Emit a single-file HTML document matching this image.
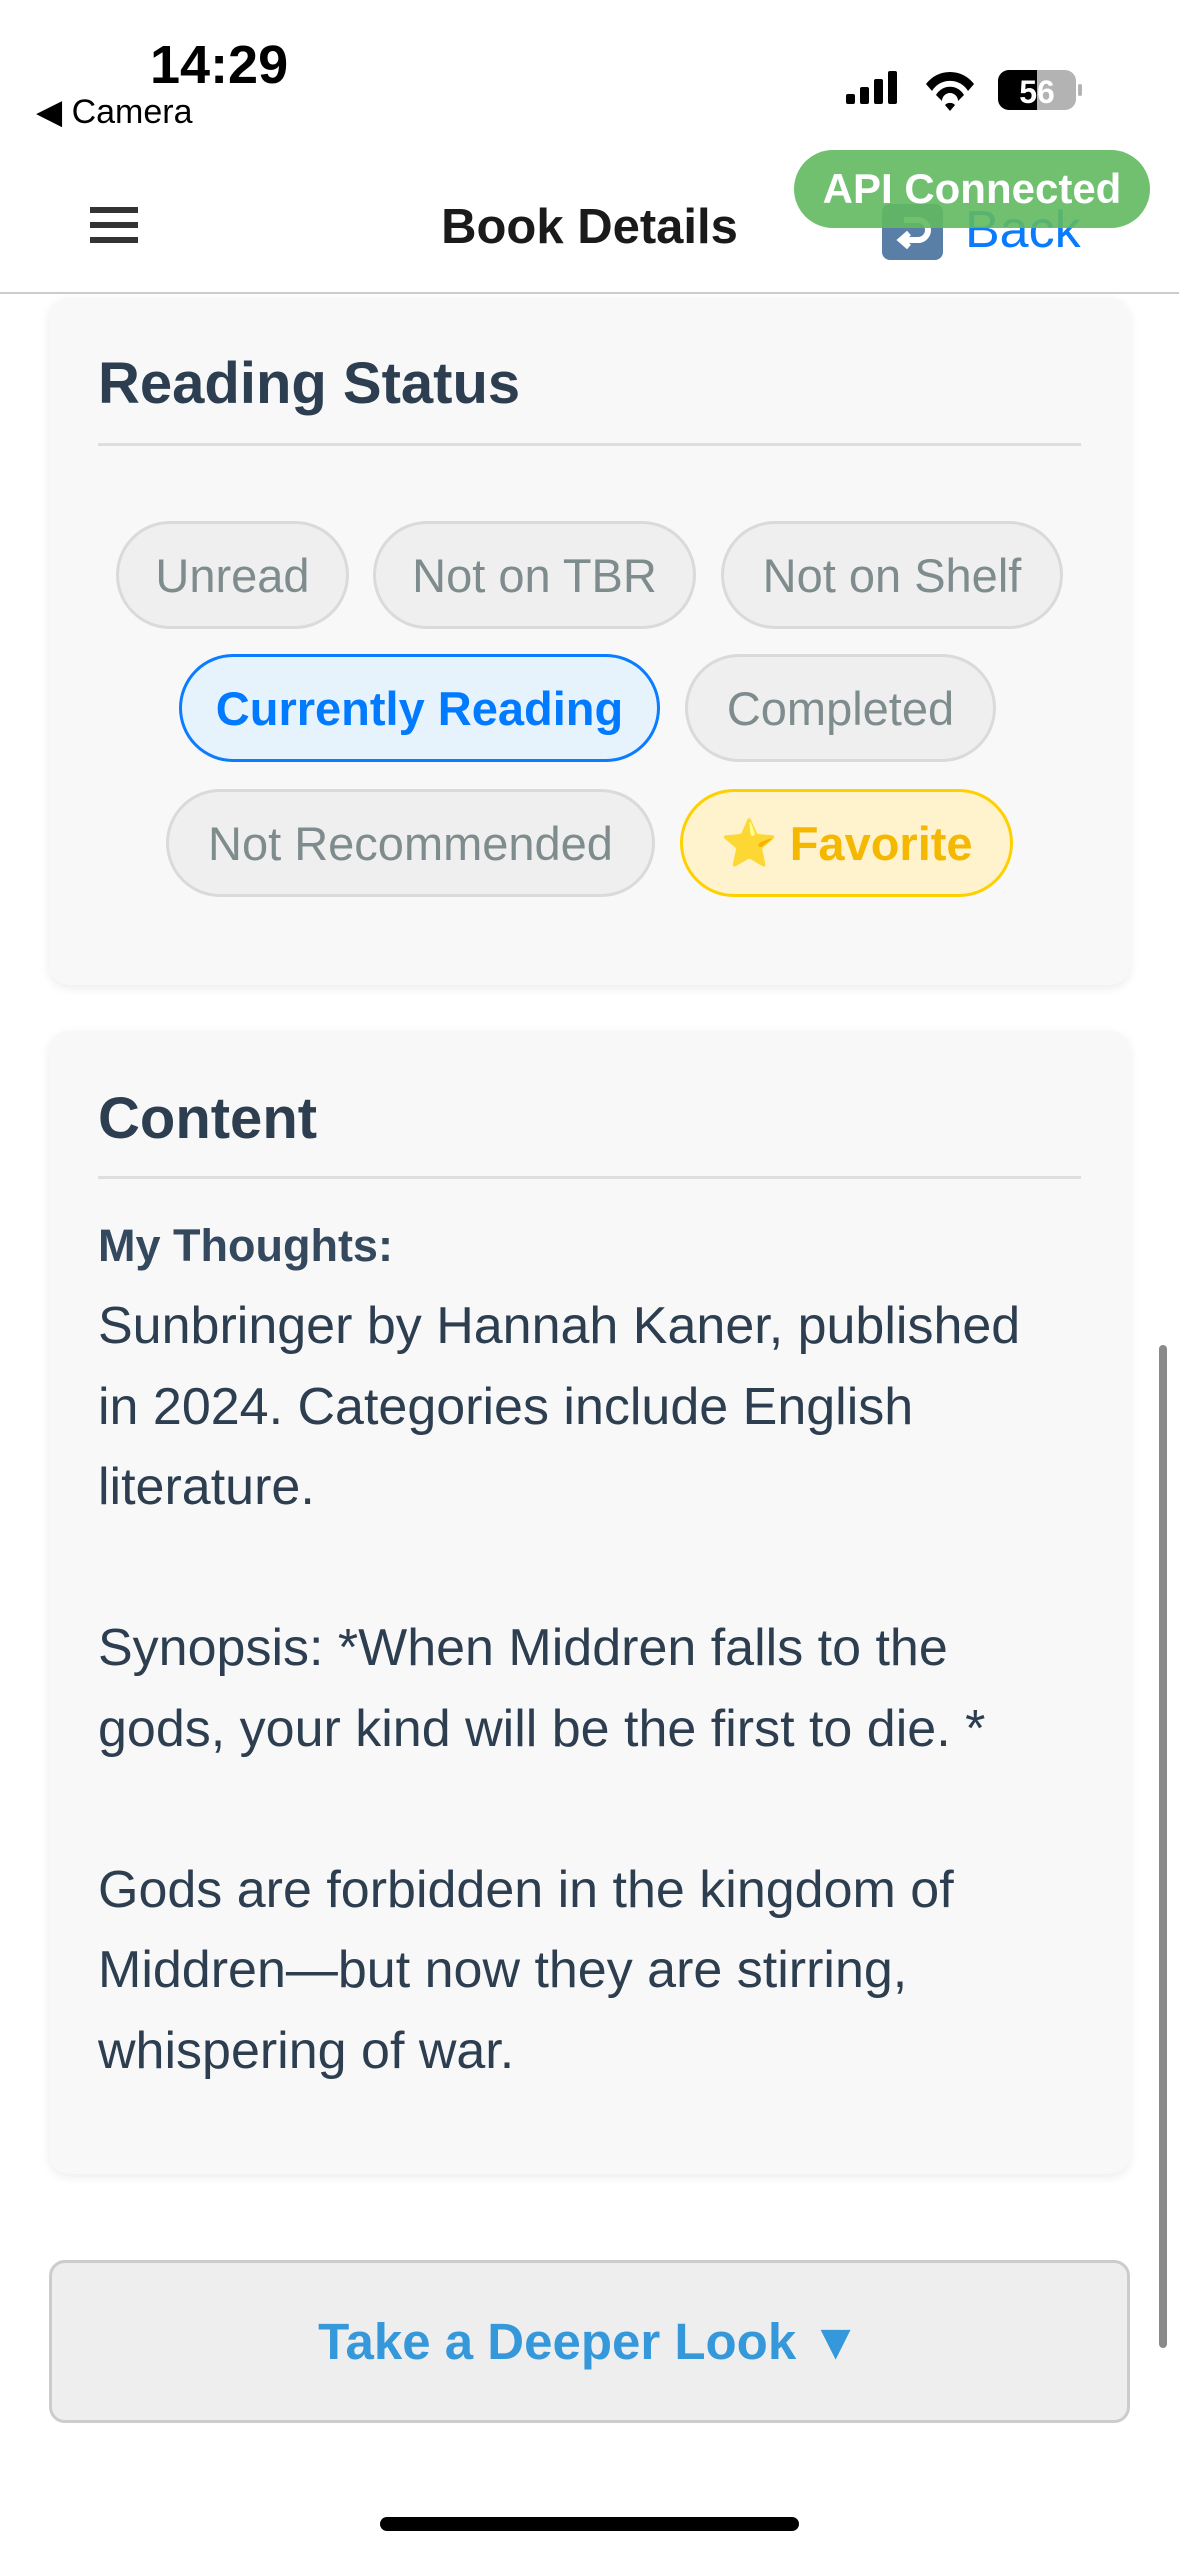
<!DOCTYPE html>
<html><head><meta charset="utf-8"><style>
*{margin:0;padding:0;box-sizing:border-box}
body{width:1179px;height:2556px;background:#fff;position:relative;overflow:hidden;font-family:"Liberation Sans",sans-serif;color:#2c3e50}
.abs{position:absolute}
.card{position:absolute;left:49px;width:1081px;background:#f8f8f8;border-radius:20px;box-shadow:0 3px 10px rgba(0,0,0,0.08)}
.title{position:absolute;left:49px;font-weight:bold;font-size:58px;color:#2c3e50;white-space:nowrap}
.div{position:absolute;left:49px;width:983px;height:3px;background:#dedede}
.pill{position:absolute;height:108px;border-radius:54px;background:#efefef;border:3px solid #dadada;color:#7f8c8d;font-size:47px;display:flex;align-items:center;justify-content:center;white-space:nowrap}
.line{position:absolute;left:98px;font-size:52px;white-space:nowrap;color:#2c3e50;line-height:60px}
</style></head><body>
<div class="abs" style="left:150px;top:34px;font-size:54px;font-weight:bold;color:#000">14:29</div>
<div class="abs" style="left:36px;top:92px;font-size:34px;color:#000">◀ Camera</div>
<svg class="abs" style="left:846px;top:70px" width="240" height="42">
<rect x="0" y="24" width="9" height="10" rx="2"/><rect x="14" y="17" width="9" height="17" rx="2"/><rect x="28" y="9" width="9" height="25" rx="2"/><rect x="42" y="1" width="9" height="33" rx="2"/>
<path d="M80 14 A30 30 0 0 1 128 14 L122 21 A21 21 0 0 0 86 21Z M90 25 A16 16 0 0 1 118 25 L112 31 A8 8 0 0 0 96 31Z M99 35 L104 41 L109 35 A7 7 0 0 0 99 35Z"/>
<rect x="152" y="0" width="78" height="40" rx="11" fill="#b3b3b3"/><path d="M163 0 H191 V40 H163 A11 11 0 0 1 152 29 V11 A11 11 0 0 1 163 0Z" fill="#000"/>
<rect x="232" y="14" width="4" height="12" rx="2" fill="#b3b3b3"/>
<text x="191" y="33" font-size="32" font-weight="bold" fill="#fff" text-anchor="middle" font-family="Liberation Sans">56</text></svg>
<div class="abs" style="left:90px;top:207px;width:48px;height:6px;background:#333"></div>
<div class="abs" style="left:90px;top:222px;width:48px;height:6px;background:#333"></div>
<div class="abs" style="left:90px;top:237px;width:48px;height:6px;background:#333"></div>
<div class="abs" style="left:0;width:1179px;top:199px;text-align:center;font-size:49px;font-weight:bold;color:#1a1a1a">Book Details</div>
<svg class="abs" style="left:882px;top:204px" width="61" height="56"><rect width="61" height="56" rx="8" fill="#5a7fa6"/><path d="M22 16 H36 A10 10 0 0 1 36 36 H20 M27 29 L19 36 L27 43" stroke="#fff" stroke-width="6" fill="none"/></svg>
<div class="abs" style="left:965px;top:200px;font-size:52px;color:#0a7aff">Back</div>
<div class="abs" style="left:794px;top:150px;width:356px;height:78px;border-radius:39px;background:rgba(96,185,96,0.9);color:#fff;font-size:42px;font-weight:bold;display:flex;align-items:center;justify-content:center">API Connected</div>
<div class="abs" style="left:0;top:292px;width:1179px;height:2px;background:#ccc"></div>

<div class="card" style="top:298px;height:687px">
<div class="title" style="top:52px">Reading Status</div>
<div class="div" style="top:145px"></div>
</div>
<div class="pill" style="left:116px;top:521px;width:233px">Unread</div>
<div class="pill" style="left:373px;top:521px;width:323px">Not on TBR</div>
<div class="pill" style="left:721px;top:521px;width:342px">Not on Shelf</div>
<div class="pill" style="left:179px;top:654px;width:481px;background:#e6f3fd;border-color:#0a7cff;color:#007aff;font-weight:bold">Currently Reading</div>
<div class="pill" style="left:685px;top:654px;width:311px">Completed</div>
<div class="pill" style="left:166px;top:789px;width:489px">Not Recommended</div>
<div class="pill" style="left:680px;top:789px;width:333px;background:#fff3cd;border-color:#ffd000;color:#f5b800;font-weight:bold"><span style="font-size:46px;margin-right:12px">⭐</span>Favorite</div>

<div class="card" style="top:1031px;height:1143px">
<div class="title" style="top:54px">Content</div>
<div class="div" style="top:145px"></div>
</div>
<div class="abs" style="left:98px;top:1220px;font-size:45px;font-weight:bold;color:#34495e">My Thoughts:</div>
<div class="line" style="top:1296px">Sunbringer by Hannah Kaner, published</div>
<div class="line" style="top:1377px">in 2024. Categories include English</div>
<div class="line" style="top:1457px">literature.</div>
<div class="line" style="top:1618px">Synopsis: *When Middren falls to the</div>
<div class="line" style="top:1699px">gods, your kind will be the first to die. *</div>
<div class="line" style="top:1860px">Gods are forbidden in the kingdom of</div>
<div class="line" style="top:1940px">Middren—but now they are stirring,</div>
<div class="line" style="top:2021px">whispering of war.</div>

<div class="abs" style="left:49px;top:2260px;width:1081px;height:163px;border-radius:16px;background:#eee;border:3px solid #ccc;display:flex;align-items:center;justify-content:center;color:#3498db;font-size:51px;font-weight:bold">Take a Deeper Look ▼</div>
<div class="abs" style="left:1159px;top:1345px;width:8px;height:1003px;border-radius:4px;background:#8a8a8a"></div>
<div class="abs" style="left:380px;top:2517px;width:419px;height:14px;border-radius:7px;background:#000"></div>
</body></html>
